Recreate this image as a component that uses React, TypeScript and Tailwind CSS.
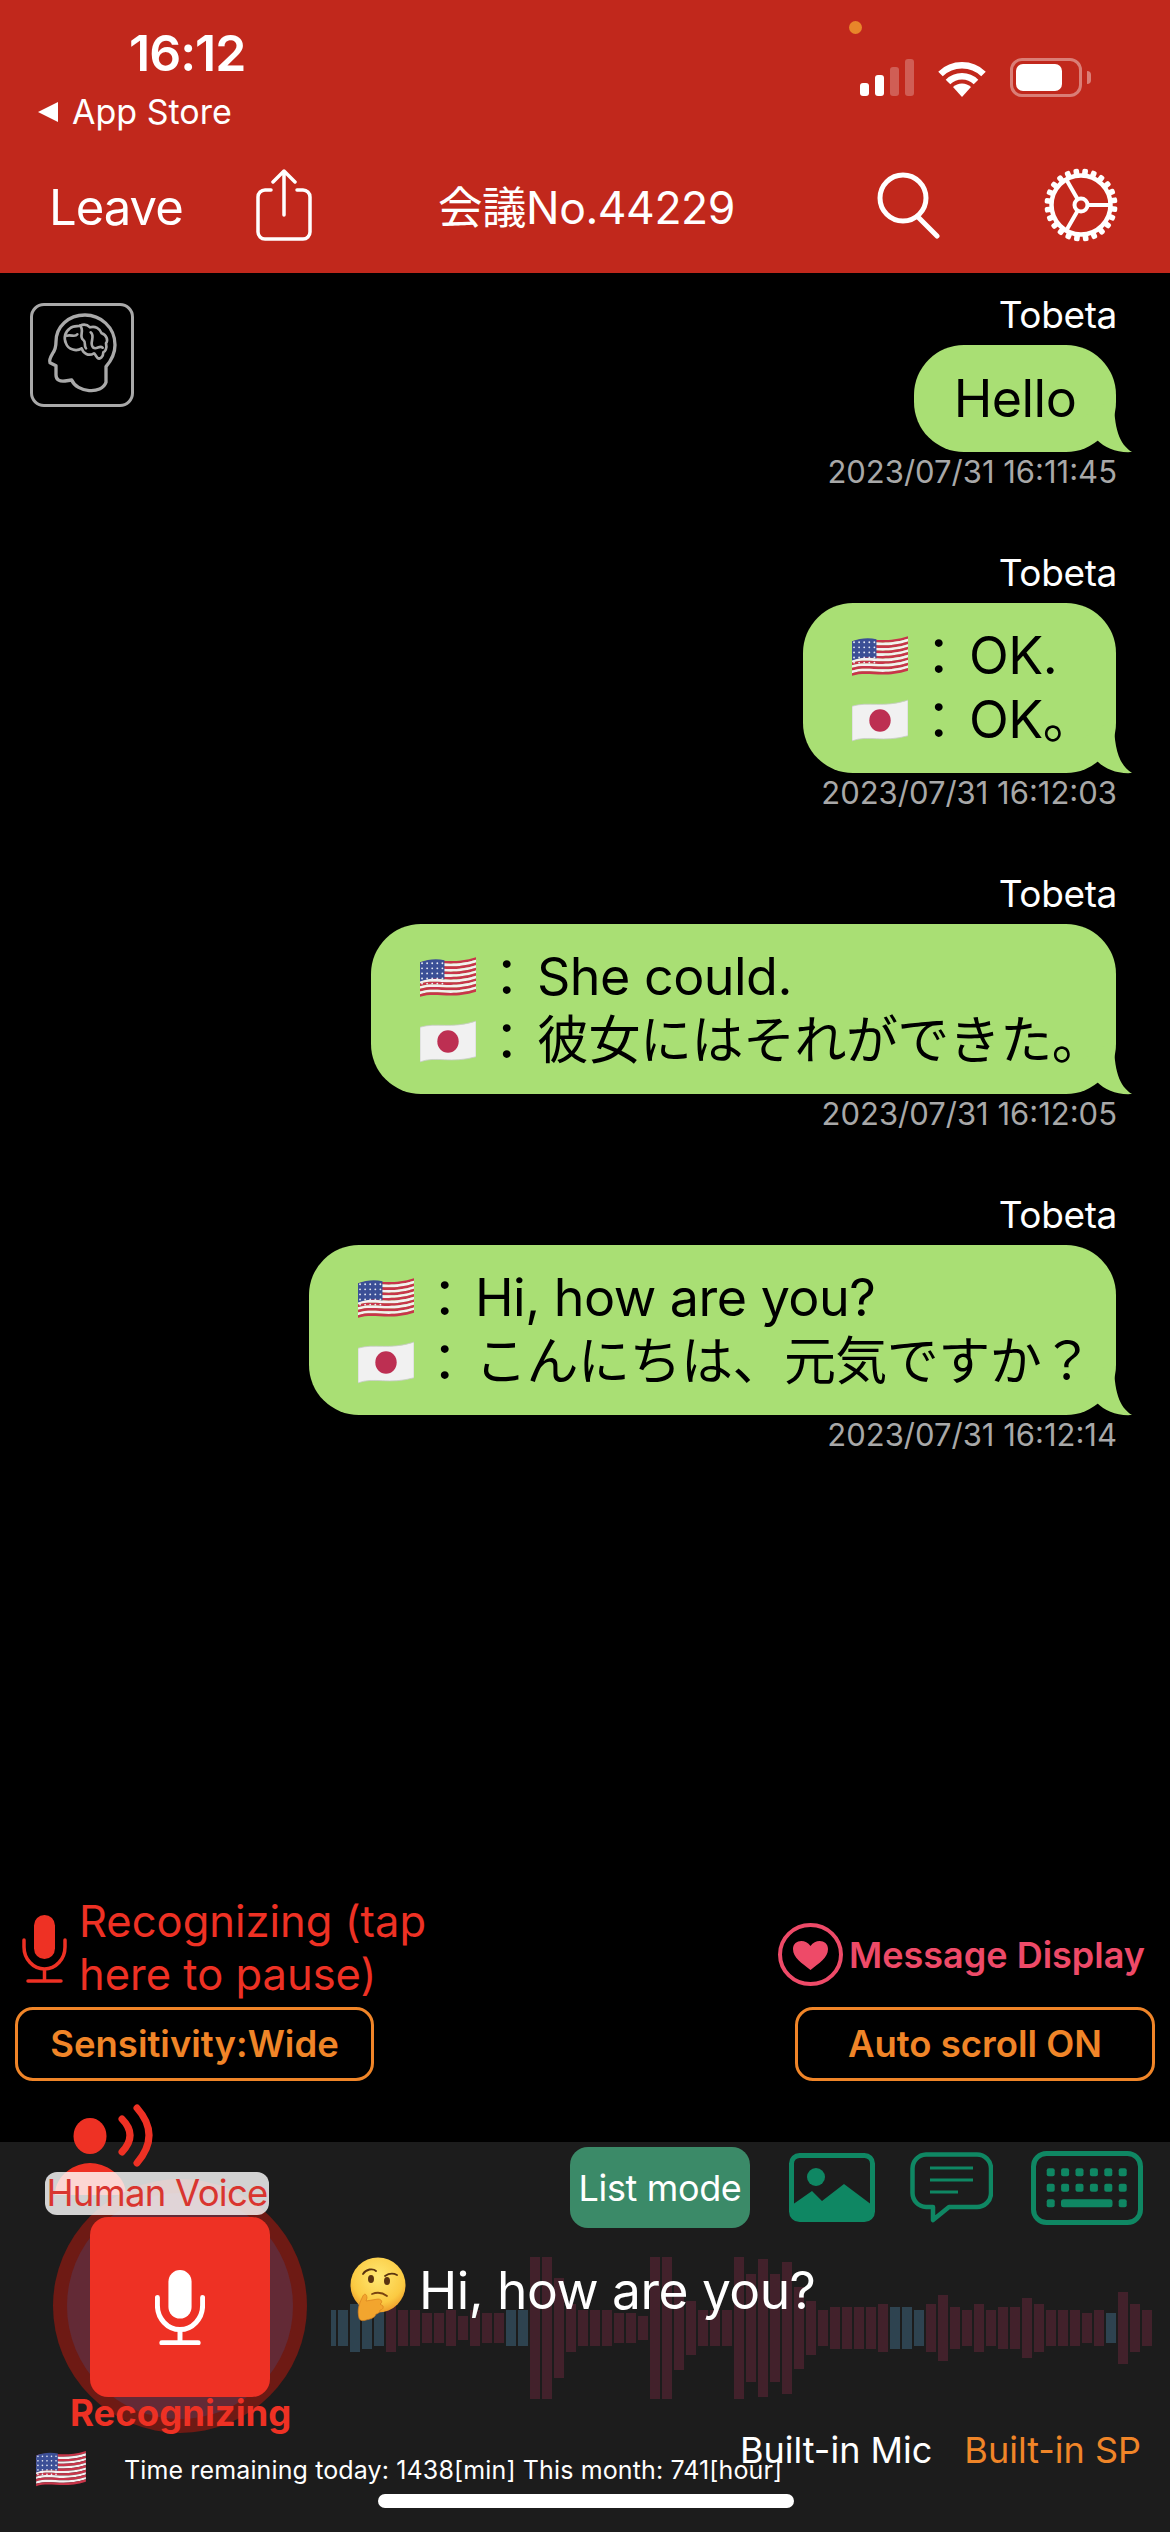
import React from "react";

const RED = "#ee3124";

function USFlag({ className }: { className?: string }) {
  const stripes = Array.from({ length: 13 }, (_, i) => i);
  const h = 34 / 13;
  const rowY = [8, 13, 18, 23, 28];
  const colX = [3, 8, 13, 18, 23];
  return (
    <svg viewBox="0 0 55 42" className={className}>
      {stripes.map((i) => {
        const y = 4 + i * h;
        return (
          <path
            key={i}
            d={`M0 ${y + 2} C16 ${y - 3} 30 ${y + 5} 55 ${y - 3} L55 ${y + h - 3} C30 ${y + h + 5} 16 ${y + h - 3} 0 ${y + h + 2} Z`}
            fill={i % 2 === 0 ? "#c8354a" : "#f4f1f2"}
          />
        );
      })}
      <path d="M0 6 C8 3 16 2 24 4 L24 23 C16 21 8 22 0 25 Z" fill="#3b4f96" />
      {rowY.map((y) =>
        colX.map((x) => <circle key={`${x}-${y}`} cx={x - 1} cy={y - 1} r="0.9" fill="#e8ecf6" />)
      )}
    </svg>
  );
}

function JPFlag({ className }: { className?: string }) {
  return (
    <svg viewBox="0 0 55 42" className={className}>
      <path d="M0 7 C16 2 30 9 55 1 L55 36 C30 43 16 35 0 41 Z" fill="#f1f1f1" stroke="#c9cdc9" strokeWidth="0.8" />
      <ellipse cx="27.5" cy="21" rx="10.5" ry="11" fill="#bd2f52" />
    </svg>
  );
}

function Mic({ className, color, sw }: { className?: string; color: string; sw: number }) {
  return (
    <svg viewBox="0 0 45 68" className={className} fill="none">
      <rect x="12" y="0" width="21" height="44" rx="10.5" fill={color} />
      <path d="M2 25 V32 A20.5 22 0 0 0 43 32 V25" stroke={color} strokeWidth={sw} strokeLinecap="round" />
      <path d="M22.5 54 V66" stroke={color} strokeWidth={sw} />
      <path d="M6 66 H39" stroke={color} strokeWidth={sw} strokeLinecap="round" />
    </svg>
  );
}

function BrainHead() {
  return (
    <svg viewBox="0 0 375 360" className="w-[125px] h-[120px] shrink-0" fill="none" stroke="#a9a9a9" strokeWidth="10" strokeLinecap="round" strokeLinejoin="round">
      <path d="M155 255 C170 292 245 300 258 262 L258 215 C275 195 285 175 285 150 C285 95 240 60 195 60 C145 60 108 95 108 140 C108 155 105 165 98 175 C92 185 86 195 90 203 L108 212 L108 240 C108 255 120 260 135 258 Z" />
      <path d="M150 100 C160 90 175 95 180 92 C195 85 205 92 210 97 C225 92 240 100 245 115 C260 120 265 135 258 145 C262 160 255 170 250 172 C250 185 240 195 232 188 C225 180 225 175 222 175 C205 185 190 175 185 160 C170 170 145 165 138 145 C130 130 135 110 150 100 Z" strokeWidth="8" />
      <path d="M140 122 C155 118 165 128 172 118 M180 92 C195 105 175 125 190 135 C200 142 190 152 198 160 M212 112 C228 125 205 145 220 158 C230 165 238 150 248 158" strokeWidth="8" />
    </svg>
  );
}

function Gear() {
  const teeth = Array.from({ length: 24 }, (_, i) => i * 15);
  return (
    <svg viewBox="0 0 74 74" className="w-[74px] h-[74px]" fill="white" stroke="white">
      <g transform="translate(37 37)">
        {teeth.map((a) => (
          <rect key={a} x="-2.8" y="-36.5" width="5.6" height="8" rx="1.8" stroke="none" transform={`rotate(${a + 7})`} />
        ))}
        <circle r="29.5" fill="none" strokeWidth="4.5" />
        <circle r="6.5" fill="none" strokeWidth="4" />
        <path d="M7 0 H30 M-3.5 -6 L-15 -26 M-3.5 6 L-15 26" strokeWidth="4" fill="none" />
      </g>
    </svg>
  );
}

function Thinking() {
  return (
    <svg viewBox="0 0 80 80" className="w-[80px] h-[80px]">
      <defs>
        <radialGradient id="face" cx="50%" cy="35%" r="68%">
          <stop offset="0%" stopColor="#ffe873" />
          <stop offset="70%" stopColor="#fbca42" />
          <stop offset="100%" stopColor="#ec9526" />
        </radialGradient>
      </defs>
      <circle cx="38" cy="35" r="27.5" fill="url(#face)" />
      <path d="M23 24 C26 19 33 18 36 21" stroke="#5a3310" strokeWidth="1.8" fill="none" strokeLinecap="round" />
      <path d="M45 26 C48 24 53 23 57 25" stroke="#5a3310" strokeWidth="1.8" fill="none" strokeLinecap="round" />
      <ellipse cx="31" cy="29" rx="3" ry="4" fill="#5a3310" />
      <ellipse cx="47" cy="31" rx="3" ry="4" fill="#5a3310" />
      <path d="M32 44 C37 42 43 43 47 46" stroke="#7a4410" strokeWidth="1.8" fill="none" strokeLinecap="round" />
      <path d="M19 68 C17 60 19 54 22 48 C24 42 27 44 27 48 L26 51 L38 49 C42 49 43 53 40 54 L43 56 C44 59 41 60 40 60 C40 63 37 64 36 64 C35 68 30 69 26 70 C23 71 20 71 19 68 Z" fill="#f2a52e" stroke="#d97f1e" strokeWidth="0.7" />
    </svg>
  );
}

type Msg = { time: string; width: string; lines?: [string, string]; single?: string };

const messages: Msg[] = [
  { time: "2023/07/31 16:11:45", width: "w-[202px]", single: "Hello" },
  { time: "2023/07/31 16:12:03", width: "w-[313px]", lines: ["OK.", "OK。"] },
  { time: "2023/07/31 16:12:05", width: "w-[745px]", lines: ["She could.", "彼女にはそれができた。"] },
  { time: "2023/07/31 16:12:14", width: "w-[807px]", lines: ["Hi, how are you?", "こんにちは、元気ですか？"] },
];

function Bubble({ m }: { m: Msg }) {
  return (
    <div className={`relative mr-[-1px] rounded-[50px] bg-[#a9df74] text-black text-[52px] leading-[64px] tracking-[-0.01em] ${m.width}`}>
      {m.single ? (
        <div className="h-[107px] flex items-center justify-center">{m.single}</div>
      ) : (
        <div className="pl-[49px] py-[21px] flex flex-col">
          <div className="flex items-center h-[64px]">
            <USFlag className="w-[56px] h-[43px] shrink-0" />
            <span className="w-[61px] text-center pt-[4px]">：</span>
            <span>{m.lines![0]}</span>
          </div>
          <div className="flex items-center h-[64px]">
            <JPFlag className="w-[56px] h-[43px] shrink-0" />
            <span className="w-[61px] text-center pt-[4px]">：</span>
            <span>{m.lines![1]}</span>
          </div>
        </div>
      )}
      <svg viewBox="0 0 50 55" className="absolute right-[-16px] bottom-[-1px] w-[50px] h-[55px]">
        <path d="M32 0 C32 30 37 46 50 54 C35 55 23 50 15 42 L0 20 Z" fill="#a9df74" />
      </svg>
    </div>
  );
}

const wave: [number, boolean][] = [
  [18, true], [24, true], [21, true], [18, true],
  [24, false], [18, false], [18, false], [15, false], [15, false], [18, false], [12, false], [18, false], [15, false], [15, false],
  [18, true], [18, true],
  [71, false], [71, false], [50, false], [24, false], [18, false], [18, false], [18, false], [15, false], [15, false], [12, false],
  [71, false], [71, false], [42, false], [27, false], [18, false], [18, false], [18, false], [71, false], [54, false], [69, false], [54, false], [66, false], [41, false], [27, false], [18, false],
  [21, false], [21, false], [21, false], [21, false], [24, false],
  [21, true], [21, true], [18, true],
  [24, false], [33, false], [21, false], [18, false], [24, false], [18, false], [21, false], [21, false], [30, false], [24, false], [18, false], [18, false], [18, false], [15, false], [18, false],
  [15, true],
  [36, false], [24, false], [18, false],
];

export default function App() {
  return (
    <div className="w-[1170px] h-[2532px] bg-black flex flex-col overflow-hidden text-white [font-family:Inter,'Noto_Sans_CJK_JP',sans-serif]">
      {/* Header */}
      <header className="relative h-[273px] shrink-0 bg-[#c1281c] flex flex-col">
        <div className="absolute left-[849px] top-[21px] w-[13px] h-[13px] rounded-full bg-[#e8862a]" />
        <div className="flex justify-between h-[139px]">
          <div className="flex flex-col pl-[38px] pt-[28px]">
            <div className="pl-[91px] text-[50px] leading-[50px] font-semibold tracking-[-0.02em]">16:12</div>
            <div className="flex items-center mt-[16px] h-[36px]">
              <svg viewBox="0 0 20 20" className="w-[20px] h-[20px]"><path d="M20 0 V20 L0 10 Z" fill="white" /></svg>
              <span className="ml-[14px] text-[34px] leading-[36px]">App Store</span>
            </div>
          </div>
          <div className="flex items-end gap-[23px] pb-[42px] pr-[79px]">
            <div className="flex items-end gap-[6px] pb-[1px]">
              <div className="w-[9px] h-[13px] rounded-[3px] bg-white" />
              <div className="w-[9px] h-[21px] rounded-[3px] bg-white" />
              <div className="w-[9px] h-[29px] rounded-[3px] bg-white/25" />
              <div className="w-[9px] h-[37px] rounded-[3px] bg-white/25" />
            </div>
            <svg viewBox="0 0 50 37" className="w-[50px] h-[37px]" fill="white">
              <path d="M3.5 14 A31 31 0 0 1 46.5 14" fill="none" stroke="white" strokeWidth="6.5" />
              <path d="M11 22 A20 20 0 0 1 39 22" fill="none" stroke="white" strokeWidth="6.5" />
              <path d="M25 37 L16 27 A13 13 0 0 1 34 27 Z" />
            </svg>
            <div className="flex items-center gap-[5px]">
              <div className="w-[72px] h-[39px] rounded-[12px] border-[3px] border-white/40 p-[3px]">
                <div className="w-[46px] h-full rounded-[7px] bg-white" />
              </div>
              <div className="w-[4px] h-[13px] rounded-r-full bg-white/40" />
            </div>
          </div>
        </div>
        <div className="flex items-center h-[134px] pl-[49px] pb-[2px]">
          <span className="w-[207px] text-[49px] leading-[60px] tracking-[-0.02em] pt-[5px]">Leave</span>
          <svg viewBox="0 0 56 72" className="w-[56px] h-[72px]" fill="none" stroke="white" strokeWidth="3.5" strokeLinecap="round" strokeLinejoin="round">
            <path d="M15 21 H9 A7 7 0 0 0 2 28 V63 A7 7 0 0 0 9 70 H47 A7 7 0 0 0 54 63 V28 A7 7 0 0 0 47 21 H41" />
            <path d="M28 2 V46 M17 13 L28 2 L39 13" />
          </svg>
          <span className="ml-[126px] w-[438px] text-[44.5px] leading-[60px] tracking-[-0.01em] pt-[5px]">会議No.44229</span>
          <svg viewBox="0 0 66 67" className="w-[66px] h-[67px]" fill="none" stroke="white" strokeWidth="5" strokeLinecap="round">
            <circle cx="27" cy="26" r="23" />
            <path d="M42 45 L61 64" />
          </svg>
          <div className="ml-[102px]"><Gear /></div>
        </div>
      </header>

      {/* Main */}
      <main className="flex-1 flex flex-col min-h-0">
        <div className="flex-1 flex min-h-0 pl-[30px] pr-[55px]">
          <div className="mt-[30px] w-[104px] h-[104px] shrink-0 rounded-[14px] border-[3px] border-[#a9a9a9] flex items-center justify-center">
            <div className="w-[98px] h-[98px] flex items-center justify-center overflow-hidden"><BrainHead /></div>
          </div>
          <div className="flex-1 flex flex-col items-end pt-[21px] gap-[60px]">
            {messages.map((m) => (
              <div key={m.time} className="flex flex-col items-end">
                <div className="text-[37px] leading-[42px] mb-[9px] mr-[-2px] tracking-[-0.01em]">Tobeta</div>
                <Bubble m={m} />
                <div className="text-[31px] leading-[40px] text-[#a8a8a8] mr-[-2px]">{m.time}</div>
              </div>
            ))}
          </div>
        </div>

        <div className="flex justify-between items-end pl-[15px] pr-[15px] h-[231px] shrink-0 pb-[61px]">
          <div className="flex flex-col">
            <div className="flex pl-[7px] gap-[12px] items-center">
              <Mic className="w-[45px] h-[68px]" color={RED} sw={3.5} />
              <div className="text-[43.5px] leading-[53px] text-[#ee3124] w-[400px] -mt-[2px]">
                Recognizing (tap<br />here to pause)
              </div>
            </div>
            <div className="mt-[6px] w-[359px] h-[74px] rounded-[18px] border-[3px] border-[#f08528] flex items-center justify-center text-[#f08528] text-[36.5px] font-semibold">
              Sensitivity:Wide
            </div>
          </div>
          <div className="flex flex-col items-end">
            <div className="flex items-center gap-[6px] pr-[10px]">
              <svg viewBox="0 0 65 63" className="w-[65px] h-[63px]" fill="none">
                <ellipse cx="32.5" cy="31.5" rx="30.5" ry="29.5" stroke="#ee4a68" strokeWidth="4" />
                <path d="M32.5 47 C24 40 15 35 15 26 C15 17 27 15 32.5 23 C38 15 50 17 50 26 C50 35 41 40 32.5 47 Z" fill="#ee4a68" />
              </svg>
              <span className="text-[36px] leading-[44px] font-semibold text-[#ee4a68]">Message Display</span>
            </div>
            <div className="mt-[21px] w-[360px] h-[74px] rounded-[18px] border-[3px] border-[#f08528] flex items-center justify-center text-[#f08528] text-[36.5px] font-semibold">
              Auto scroll ON
            </div>
          </div>
        </div>
      </main>

      {/* Bottom panel */}
      <section className="relative h-[390px] shrink-0 bg-[#1c1c1c] flex flex-col">
        {/* waveform */}
        <div className="absolute left-[331px] top-[114px] h-[144px] flex items-center gap-[2px]">
          <div className="w-[5px] h-[36px] bg-[#2e4350]" />
          {wave.map(([h, blue], i) => (
            <div
              key={i}
              className={`w-[10px] ${blue ? "bg-[#2e4350]" : "bg-[#42212b]"}`}
              style={{ height: h * 2 }}
            />
          ))}
        </div>

        {/* tool row */}
        <div className="relative flex justify-end items-center pt-[5px] pr-[27px] h-[86px]">
          <div className="w-[180px] h-[81px] rounded-[18px] bg-[#3b8a68] flex items-center justify-center text-[36px] tracking-[-0.01em]">List mode</div>
          <svg viewBox="0 0 86 69" className="ml-[39px] w-[86px] h-[69px]" fill="none">
            <rect x="2.5" y="2.5" width="81" height="64" rx="8" stroke="#0f8763" strokeWidth="5" />
            <circle cx="27" cy="24" r="9" fill="#0f8763" />
            <path d="M3 52 L23 38 L33 48 L55 31 L83 52 V66 H3 Z" fill="#0f8763" />
          </svg>
          <svg viewBox="0 0 83 71" className="ml-[35px] w-[83px] h-[71px]" fill="none" stroke="#0f8763">
            <path d="M16 2.5 H67 A14 14 0 0 1 81 16.5 V41 A14 14 0 0 1 67 55 H39 L23 68 V55 H16 A14 14 0 0 1 2.5 41 V16.5 A14 14 0 0 1 16 2.5 Z" strokeWidth="4.5" strokeLinejoin="round" />
            <path d="M20 16 H63 M20 28 H63 M20 40 H48" strokeWidth="3" />
          </svg>
          <svg viewBox="0 0 112 74" className="ml-[38px] w-[112px] h-[74px]" fill="#0f8763">
            <rect x="2.5" y="2.5" width="107" height="69" rx="13" fill="none" stroke="#0f8763" strokeWidth="5" />
            {[0, 1, 2, 3, 4, 5].map((c) => (
              <React.Fragment key={c}>
                <rect x={15.7 + c * 14.4} y="17.3" width="8" height="8" rx="2" />
                <rect x={15.7 + c * 14.4} y="32.7" width="8" height="8" rx="2" />
              </React.Fragment>
            ))}
            <rect x="15.7" y="48.3" width="8" height="8" rx="2" />
            <rect x="30" y="48.3" width="51.5" height="8" rx="2.5" />
            <rect x="87.7" y="48.3" width="8" height="8" rx="2" />
          </svg>
        </div>

        {/* recognized text */}
        <div className="relative flex items-center mt-[22px] ml-[340px] h-[80px]">
          <Thinking />
          <span className="text-[51.5px] leading-[64px] -ml-[1px] tracking-[-0.01em]">Hi, how are you?</span>
        </div>

        {/* outputs */}
        <div className="relative flex justify-end gap-[32px] pr-[29px] mt-[98px] text-[36px] leading-[44px]">
          <span>Built-in Mic</span>
          <span className="text-[#f08528]">Built-in SP</span>
        </div>

        {/* mic cluster */}
        <svg viewBox="0 0 105 100" className="absolute left-[50px] top-[-40px] w-[105px] h-[100px]" fill={RED}>
          <ellipse cx="40" cy="34" rx="16.5" ry="18" />
          <path d="M72 17 Q88 33 72 50 M87 6 Q111 33 87 61" fill="none" stroke={RED} strokeWidth="7" strokeLinecap="round" />
          <path d="M5 93 C5 72 26 61 40 61 C54 61 76 72 76 93 Z" />
        </svg>
        <div className="absolute left-[53px] top-[37px] w-[254px] h-[254px] rounded-full bg-[#6e1a14] flex items-center justify-center">
          <div className="w-[226px] h-[226px] rounded-full bg-[#632a36]" />
        </div>
        <div className="absolute left-[45px] top-[30px] w-[224px] h-[43px] rounded-[12px] bg-white/80 text-[#d9352f] text-[36.5px] leading-[43px] tracking-[-0.02em] text-center whitespace-nowrap">Human Voice</div>
        <div className="absolute left-[90px] top-[75px] w-[180px] h-[180px] rounded-[18px] bg-[#ee3124] flex items-center justify-center">
          <Mic className="w-[50px] h-[75px]" color="white" sw={4.5} />
        </div>
        <div className="absolute left-[70px] top-[249px] w-[219px] text-center text-[36.5px] leading-[44px] font-bold text-[#ee3124] whitespace-nowrap">Recognizing</div>

        {/* quota line */}
        <USFlag className="absolute left-[36px] top-[308px] w-[50px] h-[38px]" />
        <div className="absolute left-[124px] top-[313px] text-[25px] leading-[30px] tracking-[0.13px] whitespace-nowrap">Time remaining today: 1438[min] This month: 741[hour]</div>

        {/* home indicator */}
        <div className="absolute left-[378px] top-[352px] w-[416px] h-[14px] rounded-full bg-white" />
      </section>
    </div>
  );
}
